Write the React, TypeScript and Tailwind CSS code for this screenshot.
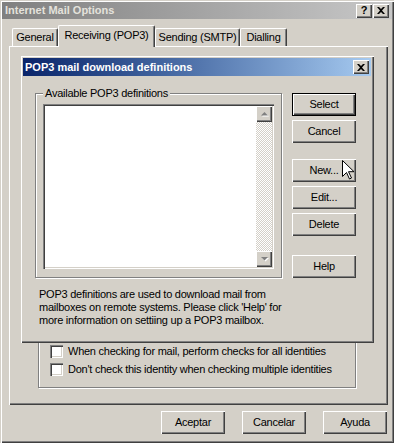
import type { ReactNode } from "react";

const FONT = "font-['Liberation_Sans',Arial,sans-serif]";
const RAISED =
  "shadow-[inset_1px_1px_0_#ffffff,inset_-1px_-1px_0_#404040,inset_-2px_-2px_0_#808080]";
const WINDOW =
  "shadow-[inset_1px_1px_0_#d4d0c8,inset_2px_2px_0_#ffffff,inset_-1px_-1px_0_#404040,inset_-2px_-2px_0_#808080]";
const SUNKEN =
  "shadow-[inset_1px_1px_0_#808080,inset_2px_2px_0_#404040,inset_-1px_-1px_0_#ffffff,inset_-2px_-2px_0_#d4d0c8]";
const ETCHED = "border border-[#808080] shadow-[inset_1px_1px_0_#ffffff,1px_1px_0_#ffffff]";

function CapButton({ children }: { children: ReactNode }) {
  return (
    <div
      className={`w-[16px] h-[14px] bg-[#d4d0c8] ${RAISED} flex items-center justify-center text-black font-bold text-[11px] leading-none tracking-normal`}
    >
      {children}
    </div>
  );
}

function CloseGlyph() {
  return (
    <svg width="8" height="7" viewBox="0 0 8 7">
      <path d="M0 0h2l2 2 2-2h2L5 3.5 8 7H6L4 5 2 7H0l3-3.5z" fill="#000" />
    </svg>
  );
}

function Button({ label, isDefault = false }: { label: string; isDefault?: boolean }) {
  return (
    <div className={`w-[64px] h-[23px] ${isDefault ? "border border-black" : ""}`}>
      <div className={`w-full h-full flex items-center justify-center bg-[#d4d0c8] ${RAISED}`}>
        {label}
      </div>
    </div>
  );
}

function Checkbox({ label }: { label: string }) {
  return (
    <div className="flex items-center h-[13px] gap-[5px]">
      <div className={`w-[13px] h-[13px] bg-white ${SUNKEN}`} />
      <span>{label}</span>
    </div>
  );
}

function Tab({ label, width, selected = false }: { label: string; width: string; selected?: boolean }) {
  return (
    <div
      className={`${width} ${
        selected ? "h-[22px] -mb-[1px] relative z-10 pb-[3px]" : "h-[18px]"
      } bg-[#d4d0c8] border-t border-l border-white rounded-tl-[2px] border-r border-r-[#404040] rounded-tr-[2px] shadow-[inset_-1px_0_0_#808080] flex items-center justify-center`}
    >
      {label}
    </div>
  );
}

function ScrollArrow({ down = false }: { down?: boolean }) {
  return (
    <div className={`w-[16px] h-[16px] bg-[#d4d0c8] ${RAISED} flex items-center justify-center`}>
      <svg width="9" height="6" viewBox="0 0 9 6">
        {down ? (
          <>
            <path d="M1 1h7L4.5 4.5z" fill="#ffffff" transform="translate(1 1)" />
            <path d="M1 1h7L4.5 4.5z" fill="#808080" />
          </>
        ) : (
          <>
            <path d="M1 4.5h7L4.5 1z" fill="#ffffff" transform="translate(1 1)" />
            <path d="M1 4.5h7L4.5 1z" fill="#808080" />
          </>
        )}
      </svg>
    </div>
  );
}

export default function App() {
  return (
    <div
      className={`relative w-[394px] h-[443px] bg-[#d4d0c8] text-[11px] tracking-[-0.25px] text-black ${FONT} ${WINDOW}`}
    >
      <div className="flex flex-col h-full pt-[2px] px-[2px]">
        {/* title bar (inactive) */}
        <div className="h-[17px] flex items-center justify-between bg-linear-to-r from-[#808080] to-[#c8c8c8] pl-[3px] pr-[3px]">
          <span className="font-bold text-[#e4e2dc] text-[11px] tracking-normal">Internet Mail Options</span>
          <div className="flex gap-[1px]">
            <CapButton>?</CapButton>
            <CapButton>
              <CloseGlyph />
            </CapButton>
          </div>
        </div>

        {/* tabs */}
        <div className="mt-[6px] h-[21px] flex items-end pl-[10px]">
          <Tab label="General" width="w-[46px]" />
          <Tab label="Receiving (POP3)" width="w-[97px]" selected />
          <Tab label="Sending (SMTP)" width="w-[85px]" />
          <Tab label="Dialling" width="w-[47px]" />
        </div>

        {/* tab panel */}
        <div className={`ml-[7px] w-[379px] h-[359px] ${RAISED} flex flex-col justify-end pl-[29px] pb-[17px]`}>
          <div className={`w-[318px] h-[120px] ${ETCHED} flex flex-col justify-end gap-[5px] pl-[11px] pb-[11px]`}>
            <Checkbox label="When checking for mail, perform checks for all identities" />
            <Checkbox label="Don't check this identity when checking multiple identities" />
          </div>
        </div>

        {/* dialog buttons */}
        <div className="mt-[6px] flex justify-end gap-[17px] pr-[5px]">
          <Button label="Aceptar" />
          <Button label="Cancelar" />
          <Button label="Ayuda" />
        </div>
      </div>

      {/* child dialog over the page */}
      <div className={`absolute left-[20px] top-[55px] w-[354px] h-[288px] bg-[#d4d0c8] ${WINDOW} p-[3px] flex flex-col`}>
        <div className="h-[18px] flex items-center justify-between bg-linear-to-r from-[#0a246a] to-[#a6caf0] pl-[2px] pr-[2px]">
          <span className="font-bold text-white text-[11px] tracking-normal">POP3 mail download definitions</span>
          <CapButton>
            <CloseGlyph />
          </CapButton>
        </div>

        <div className="flex pt-[17px] pl-[12px]">
          <div className="w-[247px] flex flex-col">
            <div className={`relative w-[247px] h-[185px] ${ETCHED} pl-[7px] pt-[10px]`}>
              <span className="absolute -top-[7px] left-[7px] px-[2px] bg-[#d4d0c8] leading-[13px]">
                Available POP3 definitions
              </span>
              <div className={`w-[231px] h-[165px] bg-white ${SUNKEN} p-[2px] flex`}>
                <div className="flex-1" />
                <div className="w-[16px] flex flex-col">
                  <ScrollArrow />
                  <div className="flex-1 bg-[image:repeating-conic-gradient(#d4d0c8_0%_25%,#ffffff_0%_50%)] bg-[length:2px_2px]" />
                  <ScrollArrow down />
                </div>
              </div>
            </div>
            <p className="mt-[10px] ml-[4px] leading-[13px] whitespace-nowrap">
              POP3 definitions are used to download mail from
              <br />
              mailboxes on remote systems. Please click 'Help' for
              <br />
              more information on settiing up a POP3 mailbox.
            </p>
          </div>

          <div className="ml-[10px] flex flex-col">
            <Button label="Select" isDefault />
            <div className="mt-[4px]">
              <Button label="Cancel" />
            </div>
            <div className="mt-[16px]">
              <Button label="New..." />
            </div>
            <div className="mt-[4px]">
              <Button label="Edit..." />
            </div>
            <div className="mt-[4px]">
              <Button label="Delete" />
            </div>
            <div className="mt-[19px]">
              <Button label="Help" />
            </div>
          </div>
        </div>
      </div>

      {/* mouse pointer */}
      <svg className="absolute left-[342px] top-[160px]" width="12" height="20" viewBox="0 0 12 20">
        <path
          d="M0.5 0.5v16l4-4 3 6.5 2-1-3-6.3h5.5z"
          fill="#ffffff"
          stroke="#000000"
          strokeWidth="1"
          strokeLinejoin="miter"
        />
      </svg>
    </div>
  );
}
